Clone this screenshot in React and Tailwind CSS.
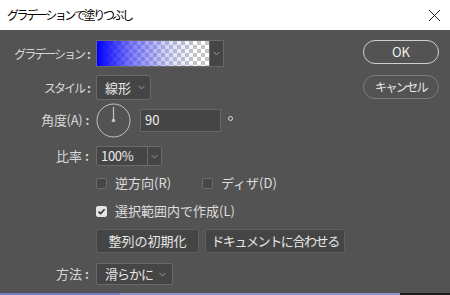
import { ChevronDown } from 'lucide-react';

const jp = { fontFamily: '"Noto Sans CJK JP", "Noto Sans", sans-serif' };

function Chevron() {
  return <ChevronDown size={11} strokeWidth={1.5} className="text-[#bdbdbd]" />;
}

function Label({ children, className = '' }) {
  return (
    <div className={`w-[96px] shrink-0 flex justify-end items-center pr-[5px] text-[#d8d8d8] ${className}`}>
      <span>{children}</span>
      <span className="ml-[3px] mr-[2px] text-[12px] font-bold">:</span>
    </div>
  );
}

function Checkbox({ checked, label, className = '' }) {
  return (
    <div className={`flex items-center ${className}`}>
      <span
        className={`w-[11px] h-[11px] rounded-[2px] border flex items-center justify-center ${
          checked ? 'bg-[#e4e4e4] border-[#e4e4e4]' : 'bg-[#474747] border-[#6e6e6e]'
        }`}
      >
        {checked && (
          <svg width="9" height="9" viewBox="0 0 9 9">
            <path d="M1.5 4.6 L3.6 6.6 L7.6 2.2" fill="none" stroke="#333" strokeWidth="1.6" />
          </svg>
        )}
      </span>
      <span className="ml-[8px] text-[13px] text-[#dedede]">{label}</span>
    </div>
  );
}

export default function App() {
  return (
    <div className="w-[450px] h-[295px] flex flex-col bg-[#535353] overflow-hidden" style={jp}>
      {/* Title bar */}
      <div className="h-[30px] bg-white flex items-center justify-between pl-[7px] pr-[9px] shrink-0">
        <span className="text-[12px] text-black tracking-[-2.4px]">グラデーションで塗りつぶし</span>
        <svg width="13" height="13" viewBox="0 0 13 13">
          <path d="M1 1 L12 12 M12 1 L1 12" stroke="#222" strokeWidth="1" />
        </svg>
      </div>

      <div className="flex flex-1">
        {/* Main form */}
        <div className="flex flex-col w-[360px] pt-[10px]">
          <div className="flex items-center h-[27px]">
            <Label className="text-[12px] tracking-[-2px]">グラデーション</Label>
            <div className="flex h-[27px] border border-[#6a6a6a] bg-[#454545]">
              <div className="w-[112px] h-full bg-[repeating-conic-gradient(#c6c6c6_0%_25%,#ffffff_0%_50%)] bg-size-[8px_8px]">
                <div className="w-full h-full bg-[linear-gradient(to_right,#0000ff_0%,rgba(40,40,255,0.6)_30%,rgba(120,120,255,0.25)_65%,rgba(255,255,255,0)_90%)]" />
              </div>
              <div className="w-[14px] flex items-center justify-center border-l border-[#6a6a6a]">
                <Chevron />
              </div>
            </div>
          </div>

          <div className="flex items-center h-[25px] mt-[8px]">
            <Label className="text-[12px] tracking-[-2px]">スタイル</Label>
            <div className="flex items-center h-[25px] w-[55px] border border-[#6a6a6a] bg-[#454545] rounded-[2px] pl-[8px] pr-[3px] justify-between">
              <span className="text-[13px] text-[#e6e6e6]">線形</span>
              <Chevron />
            </div>
          </div>

          <div className="flex items-center h-[36px] mt-[2px]">
            <Label className="text-[13px] tracking-[-0.3px]">角度(A)</Label>
            <svg width="35" height="35" viewBox="0 0 35 35" className="shrink-0">
              <circle cx="17.5" cy="17.5" r="16.5" fill="none" stroke="#c2c2c2" strokeWidth="1" />
              <line x1="17.5" y1="4" x2="17.5" y2="17.5" stroke="#c2c2c2" strokeWidth="1.2" />
              <circle cx="17.5" cy="17.5" r="1.8" fill="#c2c2c2" />
            </svg>
            <div className="ml-[9px] w-[81px] h-[23px] border border-[#676767] bg-[#454545] flex items-center pl-[4px]">
              <span className="text-[13px] text-[#f0f0f0]">90</span>
            </div>
            <span className="ml-[7px] -mt-[4px] w-[5px] h-[5px] rounded-full border border-[#dcdcdc]" />
          </div>

          <div className="flex items-center h-[20px] mt-[8px]">
            <Label className="text-[13px]">比率</Label>
            <div className="flex h-[20px] w-[66px] border border-[#6a6a6a] bg-[#454545] rounded-[2px]">
              <span className="flex-1 flex items-center pl-[4px] text-[13px] text-[#ebebeb] tracking-[-0.3px]">100%</span>
              <div className="w-[14px] flex items-center justify-center border-l border-[#6a6a6a]">
                <Chevron />
              </div>
            </div>
          </div>

          <div className="flex items-center h-[20px] mt-[7px] pl-[96px]">
            <Checkbox label="逆方向(R)" className="w-[106px]" />
            <Checkbox label="ディザ(D)" />
          </div>

          <div className="flex items-center h-[20px] mt-[8px] pl-[96px]">
            <Checkbox checked label="選択範囲内で作成(L)" />
          </div>

          <div className="flex items-center h-[24px] mt-[8px] pl-[96px] gap-[6px]">
            <div className="w-[103px] h-[24px] flex items-center justify-center border border-[#5e5e5e] bg-[#454545] rounded-[2px] text-[13px] text-[#e6e6e6]">
              整列の初期化
            </div>
            <div className="w-[140px] h-[24px] flex items-center justify-center border border-[#5e5e5e] bg-[#454545] rounded-[2px] text-[13px] text-[#e6e6e6] tracking-[-1.4px]">
              ドキュメントに合わせる
            </div>
          </div>

          <div className="flex items-center h-[22px] mt-[10px]">
            <Label className="text-[13px]">方法</Label>
            <div className="flex items-center h-[22px] w-[77px] border border-[#6a6a6a] bg-[#454545] rounded-[2px] pl-[8px] pr-[4px] justify-between">
              <span className="text-[13px] text-[#e6e6e6] tracking-[-1px]">滑らかに</span>
              <Chevron />
            </div>
          </div>
        </div>

        {/* Right buttons */}
        <div className="flex flex-col pt-[10px] pl-[3px]">
          <div className="w-[76px] h-[24px] rounded-full border-[1.5px] border-[#cfcfcf] flex items-center justify-center text-[13px] text-[#f0f0f0]">
            OK
          </div>
          <div className="w-[76px] h-[24px] mt-[11px] rounded-full border-[1.5px] border-[#7d7d7d] flex items-center justify-center text-[12px] text-[#e6e6e6] tracking-[-1.6px]">
            キャンセル
          </div>
        </div>
      </div>

      {/* Bottom strip */}
      <div className="h-[2px] flex shrink-0">
        <div className="w-[120px] bg-[#6f7cc4]" />
        <div className="w-[280px] bg-[#8a93d0]" />
        <div className="flex-1 bg-[#1c1c1c]" />
      </div>
    </div>
  );
}
